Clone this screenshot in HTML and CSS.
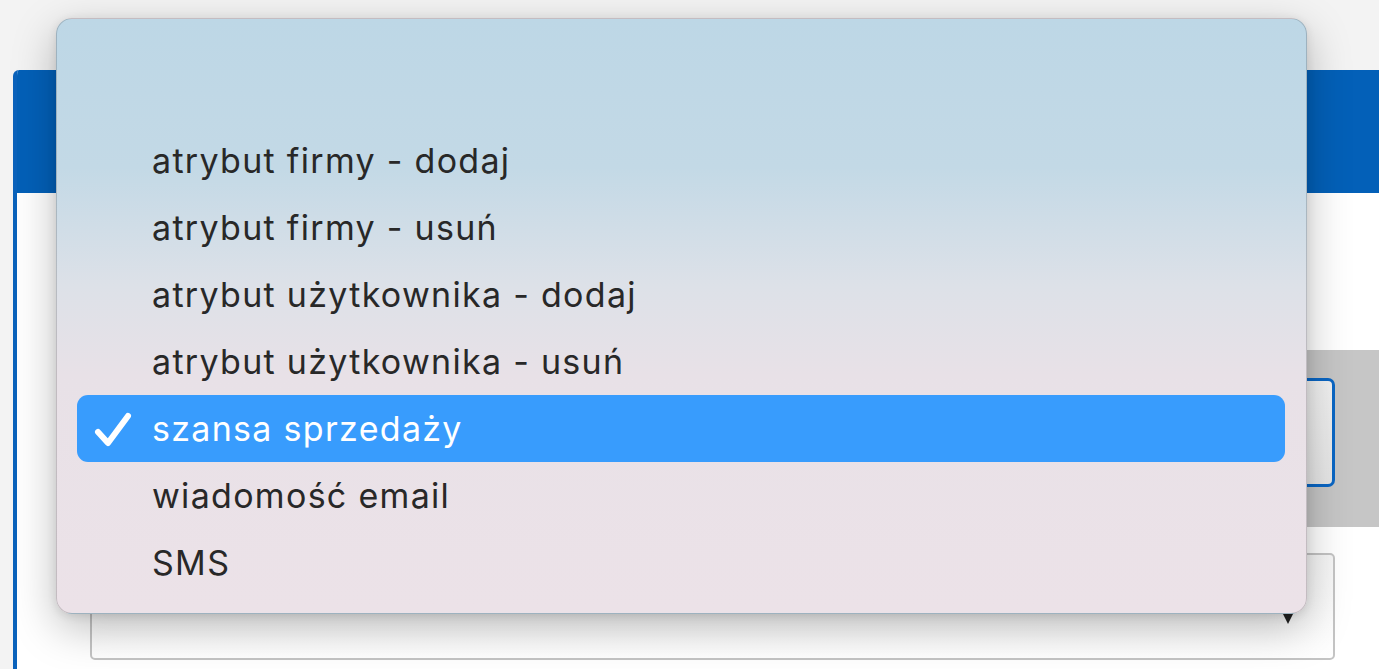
FILE: index.html
```html
<!DOCTYPE html>
<html lang="pl">
<head>
<meta charset="utf-8">
<title>Wybór akcji</title>
<link rel="stylesheet" href="styles.css">
</head>
<body>
<div class="page">
  <div class="panel">
    <div class="panel-head"></div>
    <div class="panel-body">
      <div class="band">
        <div class="focus-input"></div>
      </div>
      <div class="select-row">
        <div class="select-box"><span class="arrow"></span></div>
      </div>
    </div>
  </div>
</div>

<div class="menu" role="listbox">
  <ul class="options">
    <li class="option">atrybut firmy - dodaj</li>
    <li class="option">atrybut firmy - usuń</li>
    <li class="option">atrybut użytkownika - dodaj</li>
    <li class="option">atrybut użytkownika - usuń</li>
    <li class="option selected">
      <svg class="check" viewBox="0 0 38 36" width="38" height="36" aria-hidden="true">
        <path d="M4 20 L14 31 L34 4" fill="none" stroke="#fff" stroke-width="6" stroke-linecap="round" stroke-linejoin="round"/>
      </svg>
      szansa sprzedaży
    </li>
    <li class="option">wiadomość email</li>
    <li class="option">SMS</li>
  </ul>
</div>
</body>
</html>
```

FILE: styles.css
```css
html, body {
  margin: 0;
  padding: 0;
  height: 100%;
  overflow: hidden;
}

body {
  background: #f3f3f3;
  font-family: "Inter", "Liberation Sans", sans-serif;
}

.page {
  padding: 70px 0 0 13px;
}

.panel {
  border-left: 4px solid #0a62bb;
  border-top-left-radius: 6px;
  background: #ffffff;
  height: 620px;
  overflow: hidden;
}

.panel-head {
  height: 123px;
  background: #0360b8;
}

.panel-body {
  padding-top: 157px;
}

.band {
  margin-left: 900px;
  height: 177px;
  background: #c6c6c6;
  display: flex;
  justify-content: flex-end;
  align-items: flex-start;
  padding-top: 28px;
  box-sizing: border-box;
}

.focus-input {
  width: 300px;
  height: 109px;
  margin-right: 44px;
  box-sizing: border-box;
  border: 3px solid #0a66c4;
  border-radius: 7px;
  background: linear-gradient(#f2f2f2, #e6e6e6);
}

.select-row {
  padding: 26px 44px 0 73px;
}

.select-box {
  position: relative;
  height: 107px;
  box-sizing: border-box;
  border: 2px solid #c4c4c4;
  border-radius: 5px;
  background: linear-gradient(#f6f6f6, #ffffff);
}

.arrow {
  position: absolute;
  right: 39px;
  top: 57px;
  width: 0;
  height: 0;
  border-left: 6px solid transparent;
  border-right: 6px solid transparent;
  border-top: 12px solid #222;
}

.menu {
  position: absolute;
  left: 56px;
  top: 18px;
  width: 1251px;
  height: 596px;
  box-sizing: border-box;
  border-radius: 16px;
  border: 1px solid rgba(0, 0, 0, 0.17);
  background: linear-gradient(180deg, #bdd7e6 0%, #c3d9e6 25%, #dde1e8 45%, #e8e1e7 60%, #ece2e8 100%);
  box-shadow: 0 14px 44px rgba(0, 0, 0, 0.26), 0 2px 10px rgba(0, 0, 0, 0.1);
  padding: 108px 21px 0 20px;
}

.options {
  list-style: none;
  margin: 0;
  padding: 0;
}

.option {
  position: relative;
  height: 67px;
  display: flex;
  align-items: center;
  padding-left: 75px;
  font-size: 34px;
  color: #282828;
  border-radius: 11px;
  letter-spacing: 1.3px;
}

.option.selected {
  background: #389cfd;
  color: #ffffff;
}

.check {
  position: absolute;
  left: 17px;
  top: 17px;
}
```
